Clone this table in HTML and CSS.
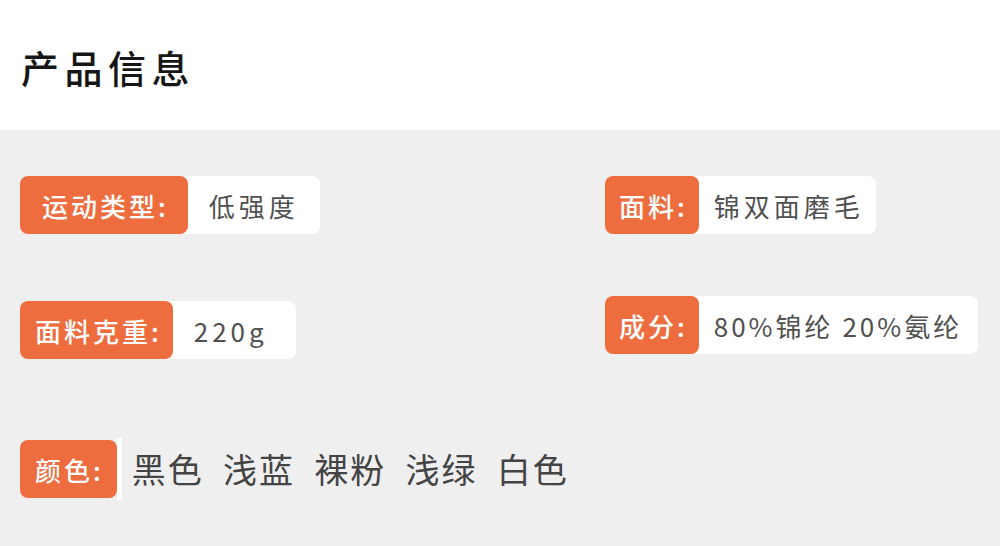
FILE: index.html
```html
<!DOCTYPE html>
<html lang="zh">
<head>
<meta charset="utf-8">
<link rel="stylesheet" href="styles.css">
</head>
<body>
<header class="head">
  <h1 class="title">产品信息</h1>
</header>
<main class="info">
  <div class="row row-1">
    <div class="cell">
      <div class="pill">
        <span class="label label-lg">运动类型:</span>
        <span class="value">低强度</span>
      </div>
    </div>
    <div class="cell cell-right">
      <div class="pill">
        <span class="label label-sm">面料:</span>
        <span class="value value-tight">锦双面磨毛</span>
      </div>
    </div>
  </div>
  <div class="row row-2">
    <div class="cell cell-low">
      <div class="pill">
        <span class="label label-md">面料克重:</span>
        <span class="value value-wide">220g</span>
      </div>
    </div>
    <div class="cell cell-right">
      <div class="pill">
        <span class="label label-sm">成分:</span>
        <span class="value value-tight value-narrow">80%锦纶 20%氨纶</span>
      </div>
    </div>
  </div>
  <div class="row row-3">
    <div class="colors">
      <span class="label label-color">颜色:</span>
      <span class="strip"></span>
      <span class="color-list">黑色&nbsp;&nbsp;浅蓝&nbsp;&nbsp;裸粉&nbsp;&nbsp;浅绿&nbsp;&nbsp;白色</span>
    </div>
  </div>
</main>
</body>
</html>
```

FILE: styles.css
```css
* { box-sizing: border-box; }
html, body {
  margin: 0;
  padding: 0;
}
body {
  width: 1000px;
  height: 546px;
  overflow: hidden;
  background: #efefef;
  font-family: "Noto Sans CJK SC", "Noto Sans", sans-serif;
}
.head {
  height: 130px;
  background: #ffffff;
  display: flex;
  align-items: center;
  padding-left: 21px;
}
.title {
  margin: 0;
  font-size: 38px;
  font-weight: 500;
  letter-spacing: 5.5px;
  color: #161616;
  line-height: 1;
  padding-top: 4px;
}
.info {
  padding: 46px 0 0 20px;
  display: flex;
  flex-direction: column;
}
.row {
  display: flex;
  align-items: flex-start;
}
.row-2 { margin-top: 62px; }
.row-3 { margin-top: 79px; }
.cell {
  flex: none;
  width: 585px;
  display: flex;
}
.cell-right {
  flex: 1;
  width: auto;
}
.cell-low { margin-top: 5px; }
.pill {
  display: flex;
  height: 58px;
  background: #ffffff;
  border-radius: 8px;
}
.label {
  display: flex;
  align-items: center;
  height: 58px;
  background: #ee6d3f;
  color: #ffffff;
  border-radius: 8px;
  font-size: 26px;
  font-weight: 500;
  letter-spacing: 3px;
  white-space: nowrap;
}
.label-lg { padding: 0 19px 0 22px; }
.label-md { padding: 0 11px 0 15px; }
.label-sm { padding: 0 11px 0 14px; }
.value {
  display: flex;
  align-items: center;
  padding: 0 21px 0 21px;
  color: #505050;
  font-size: 26px;
  letter-spacing: 4px;
  white-space: nowrap;
}
.value-tight { padding: 0 12px 0 15px; }
.value-wide { padding-right: 28px; }
.value-narrow { letter-spacing: 3px; padding-right: 16px; }
.colors {
  display: flex;
  align-items: center;
}
.label-color {
  padding: 0 13px 0 15px;
}
.strip {
  width: 5px;
  height: 62px;
  background: #ffffff;
}
.color-list {
  margin-left: 10px;
  font-size: 34px;
  color: #444444;
  letter-spacing: 2px;
  white-space: nowrap;
  line-height: 1;
}
```
